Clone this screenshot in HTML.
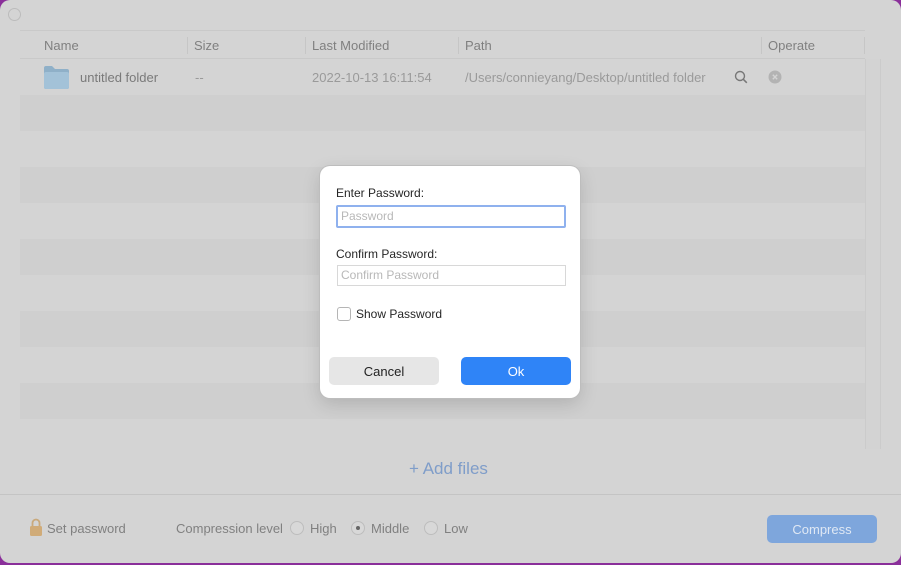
<!DOCTYPE html><html><head><style>
body{margin:0;width:901px;height:565px;background:#8a2f9a;font-family:"Liberation Sans",sans-serif;overflow:hidden;position:relative}
.win{position:absolute;left:0;top:0;width:901px;height:563px;background:#d4d4d4;border-radius:10px;overflow:hidden}
.abs{position:absolute}
.t{font-size:13px;color:#808080;position:absolute}
.row{position:absolute;left:20px;width:845px;height:36px}
.sep{position:absolute;top:37px;width:1px;height:17px;background:#c6c6c6}
.radio{position:absolute;width:12px;height:12px;border:1px solid #bdbdbd;border-radius:50%;background:#d8d8d8}
</style></head><body>
<div class="win">
<div class="abs" style="left:8px;top:8px;width:11px;height:11px;border:1px solid #bcbcbc;border-radius:50%"></div>
<div class="abs" style="left:20px;top:30px;width:845px;height:1px;background:#c9c9c9"></div>
<div class="abs" style="left:20px;top:58px;width:845px;height:1px;background:#c9c9c9"></div>
<div class="sep" style="left:187px"></div><div class="sep" style="left:305px"></div><div class="sep" style="left:458px"></div><div class="sep" style="left:761px"></div><div class="sep" style="left:864px"></div>
<div class="t" style="left:44px;top:38px">Name</div>
<div class="t" style="left:194px;top:38px">Size</div>
<div class="t" style="left:312px;top:38px">Last Modified</div>
<div class="t" style="left:465px;top:38px">Path</div>
<div class="t" style="left:768px;top:38px">Operate</div>
<div class="row" style="top:95px;background:#cfcfcf"></div>
<div class="row" style="top:167px;background:#cfcfcf"></div>
<div class="row" style="top:239px;background:#cfcfcf"></div>
<div class="row" style="top:311px;background:#cfcfcf"></div>
<div class="row" style="top:383px;background:#cfcfcf"></div>
<div class="abs" style="left:865px;top:59px;width:14px;height:390px;background:#d3d3d3;border-left:1px solid #cbcbcb;border-right:1px solid #cbcbcb"></div>
<svg class="abs" style="left:43px;top:65px" width="26" height="25"><path d="M1 3a2 2 0 0 1 2-2h6l3 3h12a2 2 0 0 1 2 2v16a2 2 0 0 1-2 2H3a2 2 0 0 1-2-2z" fill="#8fb0c8"/><rect x="1" y="7" width="25" height="17" rx="2" fill="#a3c2d8"/></svg>
<div class="t" style="left:80px;top:70px;color:#7a7a7a">untitled folder</div>
<div class="t" style="left:195px;top:70px;color:#9a9a9a">--</div>
<div class="t" style="left:312px;top:70px;color:#9a9a9a">2022-10-13 16:11:54</div>
<div class="t" style="left:465px;top:70px;color:#9a9a9a">/Users/connieyang/Desktop/untitled folder</div>
<svg class="abs" style="left:734px;top:70px" width="14" height="14"><circle cx="6" cy="6" r="4.5" fill="none" stroke="#777" stroke-width="1.4"/><path d="M9.3 9.3l3.5 3.5" stroke="#777" stroke-width="1.5"/></svg>
<svg class="abs" style="left:768px;top:70px" width="14" height="14"><circle cx="7" cy="7" r="6.5" fill="#b3b3b3"/><path d="M4.8 4.8l4.4 4.4M9.2 4.8l-4.4 4.4" stroke="#d4d4d4" stroke-width="1.4"/></svg>
<div class="abs" style="left:409px;top:459px;font-size:17px;color:#7f9dc9">+ Add files</div>
<div class="abs" style="left:0;top:494px;width:901px;height:1px;background:#c4c4c4"></div>
<svg class="abs" style="left:29px;top:518px" width="14" height="19"><path d="M3.5 8V5a3.5 3.5 0 0 1 7 0v3" fill="none" stroke="#c9a97c" stroke-width="1.8"/><rect x="1" y="8" width="12" height="10" rx="1.5" fill="#d0ab78"/></svg>
<div class="t" style="left:47px;top:521px">Set password</div>
<div class="t" style="left:176px;top:521px">Compression level</div>
<div class="radio" style="left:290px;top:521px"></div><div class="t" style="left:310px;top:521px">High</div>
<div class="radio" style="left:351px;top:521px"></div><div class="abs" style="left:356px;top:526px;width:4px;height:4px;border-radius:50%;background:#666"></div><div class="t" style="left:371px;top:521px">Middle</div>
<div class="radio" style="left:424px;top:521px"></div><div class="t" style="left:444px;top:521px">Low</div>
<div class="abs" style="left:767px;top:515px;width:110px;height:28px;border-radius:5px;background:#7ea6dc;color:#dfe8f4;font-size:13px;text-align:center;line-height:29px">Compress</div>
</div>
<div class="abs" style="left:320px;top:166px;width:260px;height:232px;background:#fff;border-radius:10px;box-shadow:0 0 0 1px #bdbdbd,0 6px 18px rgba(0,0,0,.15)">
<div class="abs" style="left:16px;top:20px;font-size:12px;color:#262626">Enter Password:</div>
<div class="abs" style="left:16px;top:39px;height:19px;border:2px solid #8fb1ee;border-radius:2px;font-size:12px;color:#b8b8b8;line-height:19px;padding-left:3px;width:223px">Password</div>
<div class="abs" style="left:16px;top:81px;font-size:12px;color:#262626">Confirm Password:</div>
<div class="abs" style="left:17px;top:99px;width:224px;height:19px;border:1px solid #d8d8d8;font-size:12px;color:#b8b8b8;line-height:19px;padding-left:3px">Confirm Password</div>
<div class="abs" style="left:17px;top:141px;width:12px;height:12px;border:1px solid #b5b5b5;border-radius:3px"></div>
<div class="abs" style="left:36px;top:141px;font-size:12px;color:#262626">Show Password</div>
<div class="abs" style="left:9px;top:191px;width:110px;height:28px;background:#e6e6e6;border-radius:5px;font-size:13px;color:#222;text-align:center;line-height:29px">Cancel</div>
<div class="abs" style="left:141px;top:191px;width:110px;height:28px;background:#2f84f7;border-radius:5px;font-size:13px;color:#fff;text-align:center;line-height:29px">Ok</div>
</div>
</body></html>
